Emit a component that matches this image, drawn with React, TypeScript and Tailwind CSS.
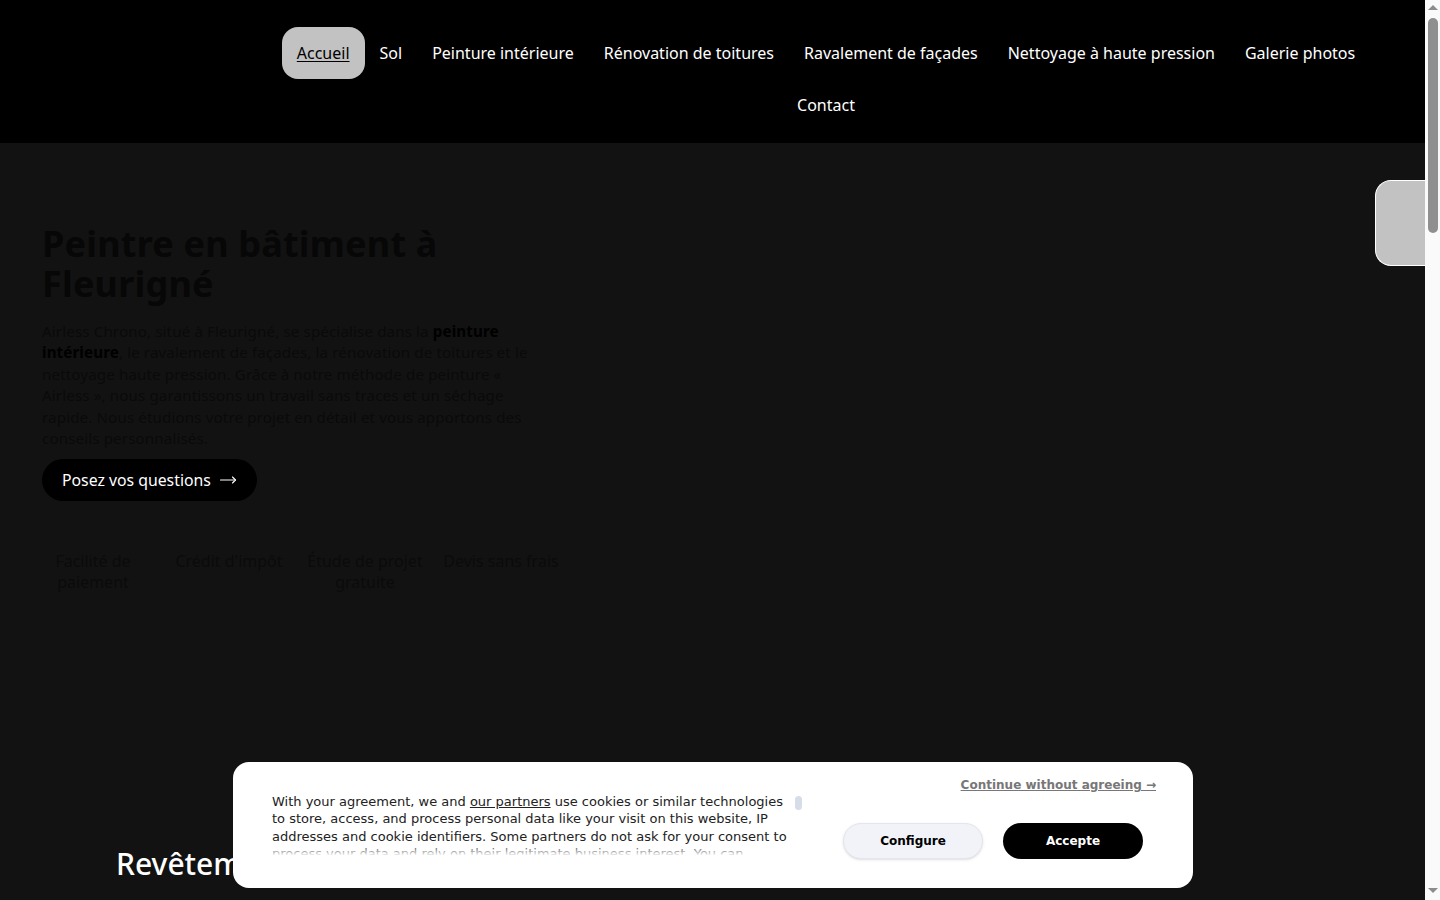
import { MoveRight } from 'lucide-react';

const navLinks = [
  'Accueil',
  'Sol',
  'Peinture intérieure',
  'Rénovation de toitures',
  'Ravalement de façades',
  'Nettoyage à haute pression',
  'Galerie photos',
  'Contact',
];

const features = ['Facilité de paiement', "Crédit d'impôt", 'Étude de projet gratuite', 'Devis sans frais'];

function Header() {
  return (
    <header className="bg-black h-[143px] flex justify-end pr-[49px] pt-[27px]">
      <nav className="w-[1100px] flex flex-wrap justify-center content-start">
        {navLinks.map((link, i) => (
          <a
            key={link}
            href="#"
            className={
              i === 0
                ? 'h-[52px] px-[15px] flex items-center rounded-[16px] bg-[#c2c2c2] text-black underline underline-offset-2 text-[16px]'
                : 'h-[52px] px-[15px] flex items-center text-white text-[16px]'
            }
          >
            {link}
          </a>
        ))}
      </nav>
    </header>
  );
}

function Hero() {
  return (
    <section className="pl-[42px] pt-[81px]">
      <h1 className="text-[#070707] font-bold text-[36px] leading-[40px] w-[520px] tracking-[0.2px]">
        Peintre en bâtiment à Fleurigné
      </h1>
      <p className="mt-[17px] w-[560px] text-[15.2px] leading-[21.4px] text-[#0a0a0a] tracking-[0.1px]">
        Airless Chrono, situé à Fleurigné, se spécialise dans la <strong className="text-black">peinture</strong>
        <br />
        <strong className="text-black">intérieure</strong>, le ravalement de façades, la rénovation de toitures et le
        <br />
        nettoyage haute pression. Grâce à notre méthode de peinture «
        <br />
        Airless », nous garantissons un travail sans traces et un séchage
        <br />
        rapide. Nous étudions votre projet en détail et vous apportons des
        <br />
        conseils personnalisés.
      </p>
      <button className="mt-[10px] h-[42px] px-[20px] rounded-full bg-black text-white text-[15.8px] flex items-center gap-[8px]">
        Posez vos questions
        <MoveRight size={18} strokeWidth={1.5} />
      </button>
      <div className="mt-[50px] -ml-[17px] flex">
        {features.map((f) => (
          <div key={f} className="w-[136px] text-center text-[16px] leading-[21px] text-[#0b0b0b] px-[8px]">
            {f}
          </div>
        ))}
      </div>
    </section>
  );
}

function SideTab() {
  return (
    <div className="fixed right-[15px] top-[180px] w-[50px] h-[86px] bg-[#c2c2c2] border border-white border-r-0 rounded-l-[16px]" />
  );
}

function Scrollbar() {
  return (
    <div className="fixed right-0 top-0 w-[15px] h-full bg-[#fafafa] flex flex-col items-center">
      <div className="mt-[5px] w-0 h-0 border-l-[5px] border-r-[5px] border-b-[5px] border-l-transparent border-r-transparent border-b-[#8c8c8c]" />
      <div className="mt-[8px] w-[10px] h-[215px] rounded-full bg-[#8f8f8f]" />
      <div className="mt-auto mb-[7px] w-0 h-0 border-l-[5px] border-r-[5px] border-t-[5px] border-l-transparent border-r-transparent border-t-[#8c8c8c]" />
    </div>
  );
}

function CookieBanner() {
  return (
    <div className="fixed left-[233px] top-[762px] w-[960px] h-[126px] bg-white rounded-[16px] flex font-['DejaVu_Sans',sans-serif]">
      <div className="relative pl-[39px] pt-[31px] w-[575px]">
        <div className="h-[62px] overflow-hidden text-[13px] leading-[17.4px] text-[#222] w-[520px]">
          With your agreement, we and <span className="underline">our partners</span> use cookies or similar
          technologies to store, access, and process personal data like your visit on this website, IP addresses and
          cookie identifiers. Some partners do not ask for your consent to process your data and rely on their
          legitimate business interest. You can
        </div>
        <div className="absolute left-[39px] top-[82px] w-[520px] h-[12px] bg-gradient-to-b from-white/0 to-white" />
        <div className="absolute left-[562px] top-[34px] w-[7px] h-[14px] rounded-full bg-[#d7dde8]" />
      </div>
      <div className="flex-1 flex flex-col items-end pr-[37px] pt-[14px]">
        <a href="#" className="text-[12px] font-bold text-[#777] underline">
          Continue without agreeing →
        </a>
        <div className="mt-[29px] flex gap-[20px] mr-[13px]">
          <button className="w-[140px] h-[36px] rounded-full bg-[#f1f3f8] border border-[#e3e6ee] text-[12px] font-bold text-black shadow-sm">
            Configure
          </button>
          <button className="w-[140px] h-[36px] rounded-full bg-black text-[12px] font-bold text-white">
            Accepte
          </button>
        </div>
      </div>
    </div>
  );
}

export default function App() {
  return (
    <div className="min-h-[1800px] w-[1425px] bg-[#121212] font-['Noto_Sans',sans-serif]">
      <Header />
      <Hero />
      <section className="pl-[116px] pt-[253px] text-white">
        <h2 className="text-[30px] leading-[36px] font-medium">Revêtements de sol</h2>
        <p className="mt-[14px] text-[15px]">Nous installons divers revêtements de sol de qualité à Fleurigné.</p>
      </section>
      <SideTab />
      <Scrollbar />
      <CookieBanner />
    </div>
  );
}
